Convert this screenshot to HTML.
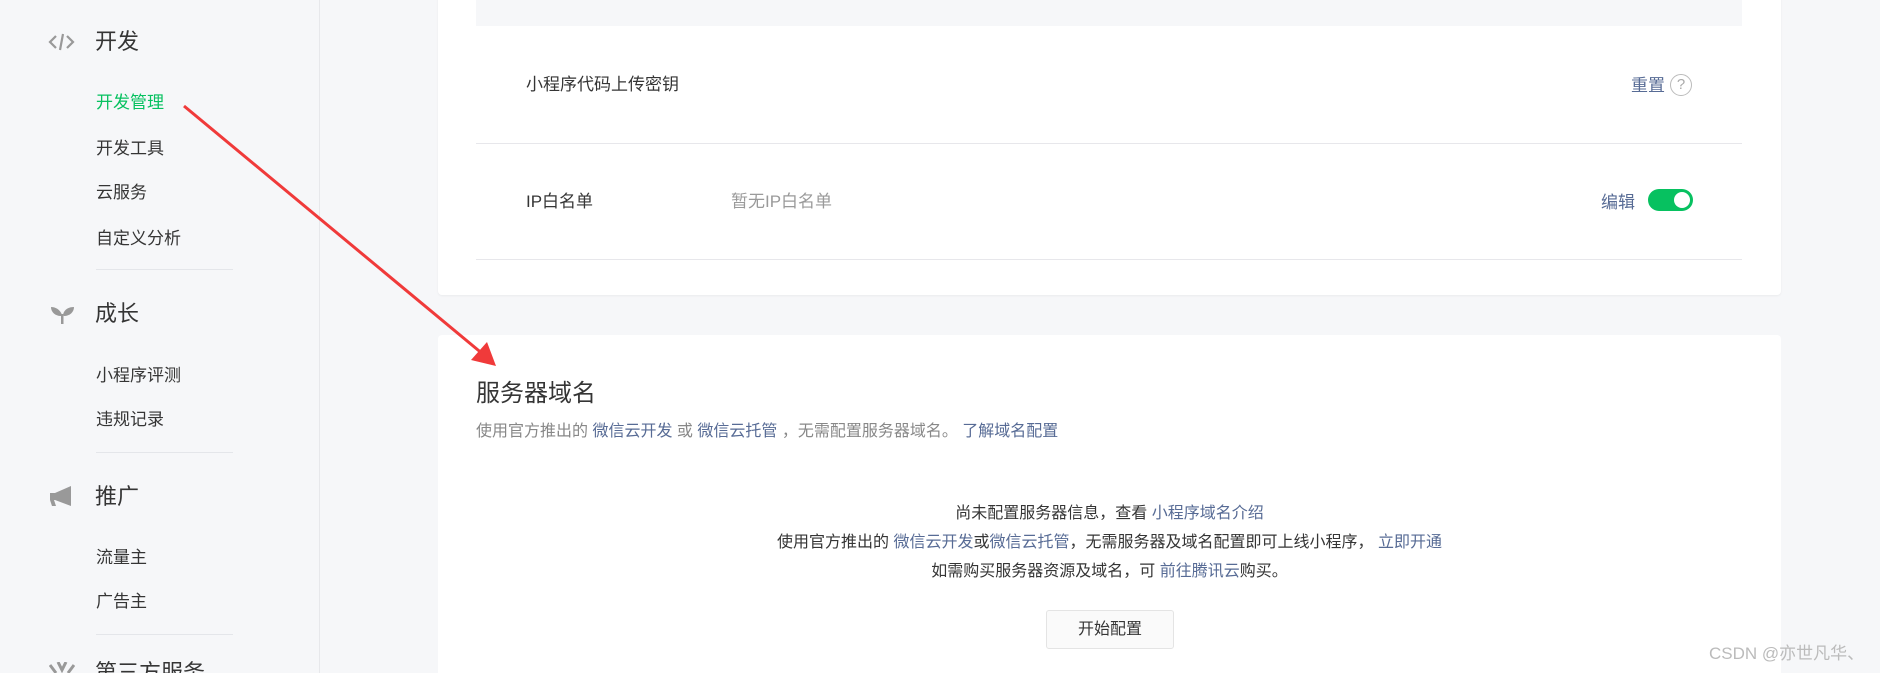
<!DOCTYPE html>
<html style="width:1880px;height:673px;overflow:hidden"><head><meta charset="utf-8"><style>
*{margin:0;padding:0;box-sizing:border-box}
body{width:1880px;height:673px;overflow:hidden;background:#f6f7f9;font-family:"Liberation Sans","Noto Sans CJK SC",sans-serif;color:#353535;position:relative}
.abs{position:absolute;white-space:nowrap;line-height:1}
.side{position:absolute;left:0;top:0;width:320px;height:673px;background:#f6f7f9;border-right:1px solid #e7e8eb;overflow:hidden}
.gt{font-size:22px;color:#353535}
.it{font-size:17px;color:#353535}
.dv{position:absolute;left:96px;width:137px;height:1px;background:#e4e6ea}
.card{position:absolute;left:438px;width:1343px;background:#fff;border-radius:4px}
.ln{position:absolute;left:476px;width:1266px;height:1px;background:#e7e7eb}
a{color:#576b95;text-decoration:none}
.c{position:absolute;left:438px;width:1343px;text-align:center;font-size:16px;line-height:1;white-space:nowrap}
</style></head><body>
<div class="side">
<svg class="abs" style="left:48px;top:33px" width="27" height="18" viewBox="0 0 27 18"><path d="M8 3L2 9l6 6M19 3l6 6-6 6M15 1l-3 16" stroke="#999" stroke-width="2.2" fill="none"/></svg>
<div class="abs gt" style="left:95px;top:31px">开发</div>
<div class="abs it" style="left:96px;top:94px;color:#07c160">开发管理</div>
<div class="abs it" style="left:96px;top:140px">开发工具</div>
<div class="abs it" style="left:96px;top:184px">云服务</div>
<div class="abs it" style="left:96px;top:230px">自定义分析</div>
<div class="dv" style="top:269px"></div>
<svg class="abs" style="left:50px;top:303px" width="25" height="22" viewBox="0 0 25 22"><path d="M12 21V12C10 6 5 4 1 4c0 5 4 9 10 9M13 12c1-6 6-8 11-8 0 5-4 9-10 9" fill="#999"/><rect x="11" y="11" width="2.5" height="10" fill="#999"/></svg>
<div class="abs gt" style="left:95px;top:303px">成长</div>
<div class="abs it" style="left:96px;top:367px">小程序评测</div>
<div class="abs it" style="left:96px;top:411px">违规记录</div>
<div class="dv" style="top:452px"></div>
<svg class="abs" style="left:49px;top:485px" width="26" height="22" viewBox="0 0 26 22"><path d="M1 8h5l16-7v20L6 15H5l2 6H3l-2-6z" fill="#999"/></svg>
<div class="abs gt" style="left:95px;top:486px">推广</div>
<div class="abs it" style="left:96px;top:549px">流量主</div>
<div class="abs it" style="left:96px;top:593px">广告主</div>
<div class="dv" style="top:634px"></div>
<svg class="abs" style="left:49px;top:662px" width="26" height="11" viewBox="0 0 26 11"><path d="M1 3l6 8M25 3l-6 8M9 0l4 8 4-8" stroke="#999" stroke-width="3" fill="none"/></svg>
<div class="abs gt" style="left:95px;top:662px">第三方服务</div>
</div>
<div class="card" style="top:-5px;height:300px;box-shadow:0 1px 2px rgba(0,0,0,.05)"></div>
<div class="abs" style="left:476px;top:0;width:1266px;height:26px;background:#f6f7f9"></div>
<div class="abs it" style="left:526px;top:76px">小程序代码上传密钥</div>
<div class="abs" style="left:1631px;top:77px;font-size:17px"><a>重置</a></div>
<div class="abs" style="left:1670px;top:74px;width:22px;height:22px;border:1.5px solid #bbb;border-radius:50%;color:#aaa;font-size:15px;text-align:center;line-height:19px">?</div>
<div class="ln" style="top:143px"></div>
<div class="abs it" style="left:526px;top:193px">IP白名单</div>
<div class="abs" style="left:731px;top:193px;font-size:17px;color:#9a9a9a">暂无IP白名单</div>
<div class="abs" style="left:1601px;top:194px;font-size:17px"><a>编辑</a></div>
<div class="abs" style="left:1648px;top:189px;width:45px;height:22px;border-radius:11px;background:#07c160"><div style="position:absolute;right:3px;top:3px;width:16px;height:16px;border-radius:50%;background:#fff"></div></div>
<div class="ln" style="top:259px"></div>
<div class="card" style="top:335px;height:338px;border-radius:4px 4px 0 0"></div>
<div class="abs" style="left:476px;top:382px;font-size:24px">服务器域名</div>
<div class="abs" style="left:476px;top:424px;font-size:16px;color:#888">使用官方推出的 <a>微信云开发</a> 或 <a>微信云托管</a> ，无需配置服务器域名。 <a>了解域名配置</a></div>
<div class="c" style="top:506px">尚未配置服务器信息，查看 <a>小程序域名介绍</a></div>
<div class="c" style="top:535px">使用官方推出的 <a>微信云开发</a>或<a>微信云托管</a>，无需服务器及域名配置即可上线小程序， <a>立即开通</a></div>
<div class="c" style="top:564px">如需购买服务器资源及域名，可 <a>前往腾讯云</a>购买。</div>
<div class="abs" style="left:1046px;top:610px;width:128px;height:39px;border:1px solid #e4e4e4;border-radius:3px;background:#fafafa;font-size:16px;text-align:center;line-height:37px">开始配置</div>
<div class="abs" style="left:1709px;top:645px;font-size:17px;color:#bbb">CSDN @亦世凡华、</div>
<svg class="abs" style="left:0;top:0" width="1880" height="673"><line x1="184" y1="106" x2="484" y2="355" stroke="#f03a3a" stroke-width="3"/><path d="M496 366L471 360 487 342z" fill="#f03a3a"/></svg>
</body></html>
